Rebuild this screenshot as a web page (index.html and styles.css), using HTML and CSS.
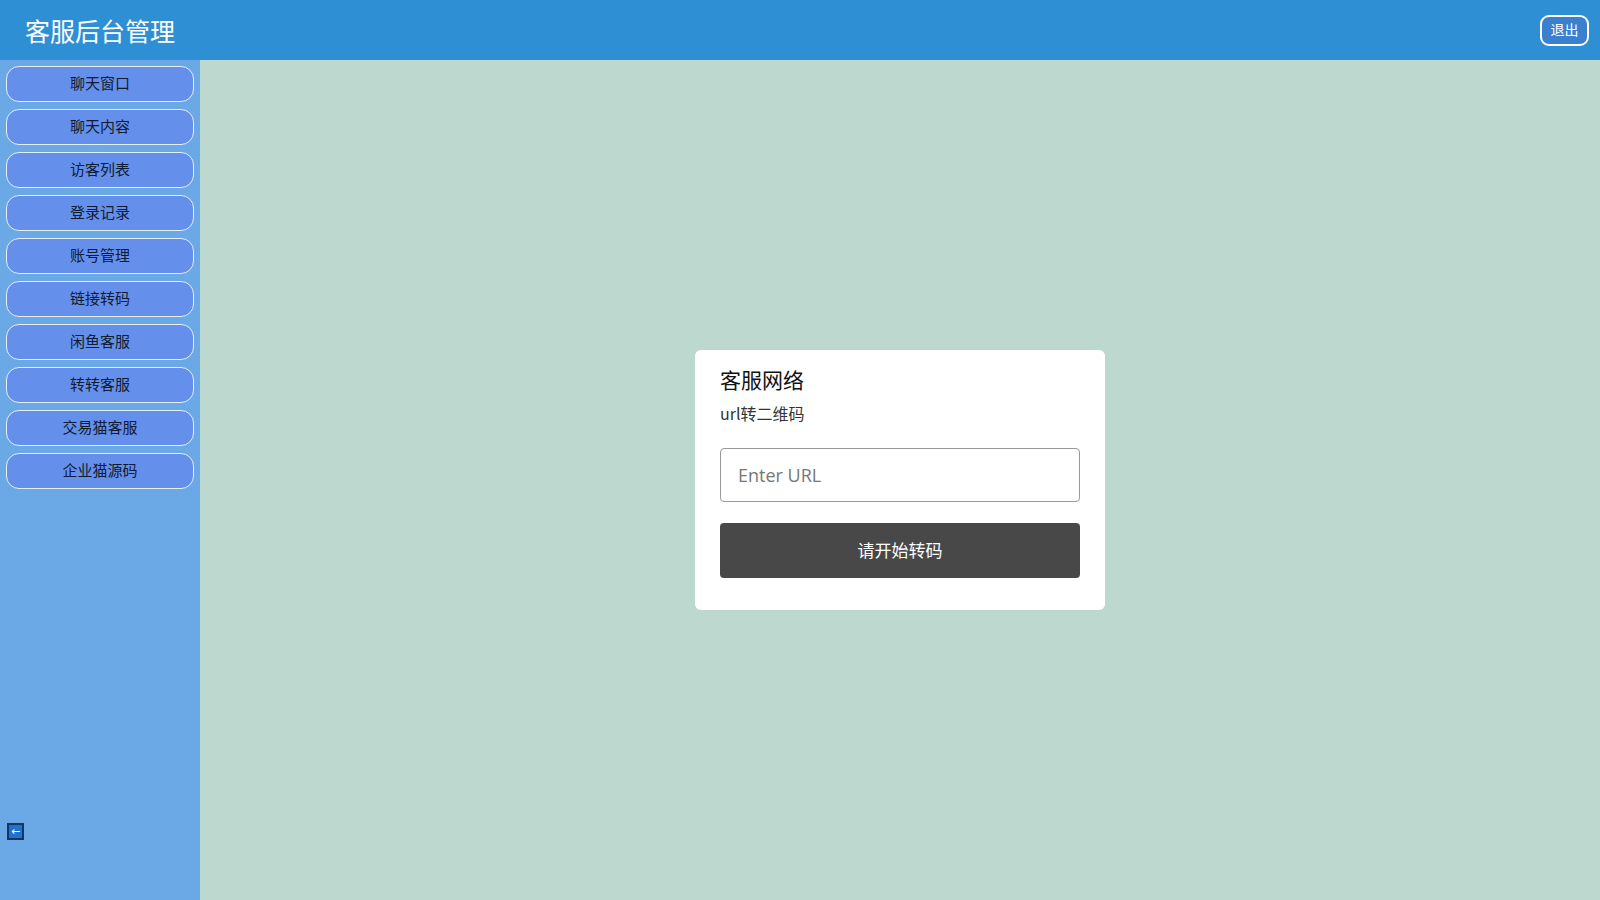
FILE: index.html
```html
<!DOCTYPE html>
<html lang="zh-CN">
<head>
  <meta charset="UTF-8">
  <meta name="viewport" content="width=device-width, initial-scale=1">
  <title>客服后台管理</title>
  <link rel="stylesheet" href="styles.css">
</head>
<body>
  <header class="topbar">
    <h1 class="logo">客服后台管理</h1>
    <button class="logout">退出</button>
  </header>

  <div class="layout">
    <aside class="sidebar">
      <nav class="menu">
        <button class="menu-btn">聊天窗口</button>
        <button class="menu-btn">聊天内容</button>
        <button class="menu-btn">访客列表</button>
        <button class="menu-btn">登录记录</button>
        <button class="menu-btn">账号管理</button>
        <button class="menu-btn">链接转码</button>
        <button class="menu-btn">闲鱼客服</button>
        <button class="menu-btn">转转客服</button>
        <button class="menu-btn">交易猫客服</button>
        <button class="menu-btn">企业猫源码</button>
      </nav>
      <button class="collapse" title="收起">&larr;</button>
    </aside>

    <main class="content">
      <div class="card">
        <h2 class="card-title">客服网络</h2>
        <p class="card-sub">url转二维码</p>
        <input class="url-input" type="text" placeholder="Enter URL">
        <button class="convert-btn">请开始转码</button>
      </div>
    </main>
  </div>
</body>
</html>
```

FILE: styles.css
```css
* {
  box-sizing: border-box;
}

body {
  font-family: "Noto Sans CJK SC", "Noto Sans", sans-serif;
  margin: 0;
  padding: 0;
  height: 900px;
  overflow: hidden;
}

.topbar {
  height: 60px;
  background-color: #2f8fd5;
  display: flex;
  align-items: center;
  justify-content: space-between;
  padding: 0 11px 0 25px;
}

.logo {
  margin: 0;
  color: #fff;
  font-size: 25px;
  font-weight: normal;
  line-height: 1;
}

.logout {
  width: 49px;
  height: 31px;
  border: 2px solid #fff;
  border-radius: 9px;
  background-color: #3b80cf;
  color: #fff;
  font-family: inherit;
  font-size: 14px;
  padding: 0 0 2px 0;
  cursor: pointer;
}

.layout {
  display: flex;
  height: 840px;
}

.sidebar {
  width: 200px;
  background-color: #6aa9e6;
  display: flex;
  flex-direction: column;
  justify-content: space-between;
  padding: 6px 6px 60px 6px;
}

.menu {
  display: flex;
  flex-direction: column;
  gap: 7px;
}

.menu-btn {
  height: 36px;
  width: 188px;
  background-color: #6490eb;
  border: 1px solid #e4eefc;
  border-radius: 13px;
  color: #0f1a33;
  font-family: inherit;
  font-size: 15px;
  padding: 0 0 3px 0;
  cursor: pointer;
}

.collapse {
  width: 17px;
  height: 17px;
  margin-left: 1px;
  padding: 0;
  border: 2px solid #17355e;
  background-color: #1f72cf;
  color: #fff;
  font-size: 11px;
  line-height: 11px;
  font-family: "DejaVu Sans", sans-serif;
}

.content {
  flex: 1;
  background-color: #bcd8cf;
  display: flex;
  align-items: center;
  justify-content: center;
}

.card {
  width: 410px;
  background-color: #fff;
  border-radius: 6px;
  padding: 15px 25px 32px 25px;
}

.card-title {
  margin: 0;
  font-size: 21px;
  font-weight: normal;
  line-height: 28px;
  color: #111;
}

.card-sub {
  margin: 9px 0 0 0;
  font-size: 16px;
  line-height: 22px;
  color: #333;
}

.url-input {
  display: block;
  width: 100%;
  height: 54px;
  margin-top: 24px;
  padding: 0 17px;
  border: 1px solid #999;
  border-radius: 4px;
  font-family: "Open Sans", sans-serif;
  font-size: 18px;
  color: #333;
}

.url-input::placeholder {
  color: #777;
}

.convert-btn {
  display: block;
  width: 100%;
  height: 55px;
  margin-top: 21px;
  padding-bottom: 3px;
  background-color: #484848;
  border: none;
  border-radius: 4px;
  color: #fff;
  font-family: inherit;
  font-size: 17px;
  cursor: pointer;
}
```
